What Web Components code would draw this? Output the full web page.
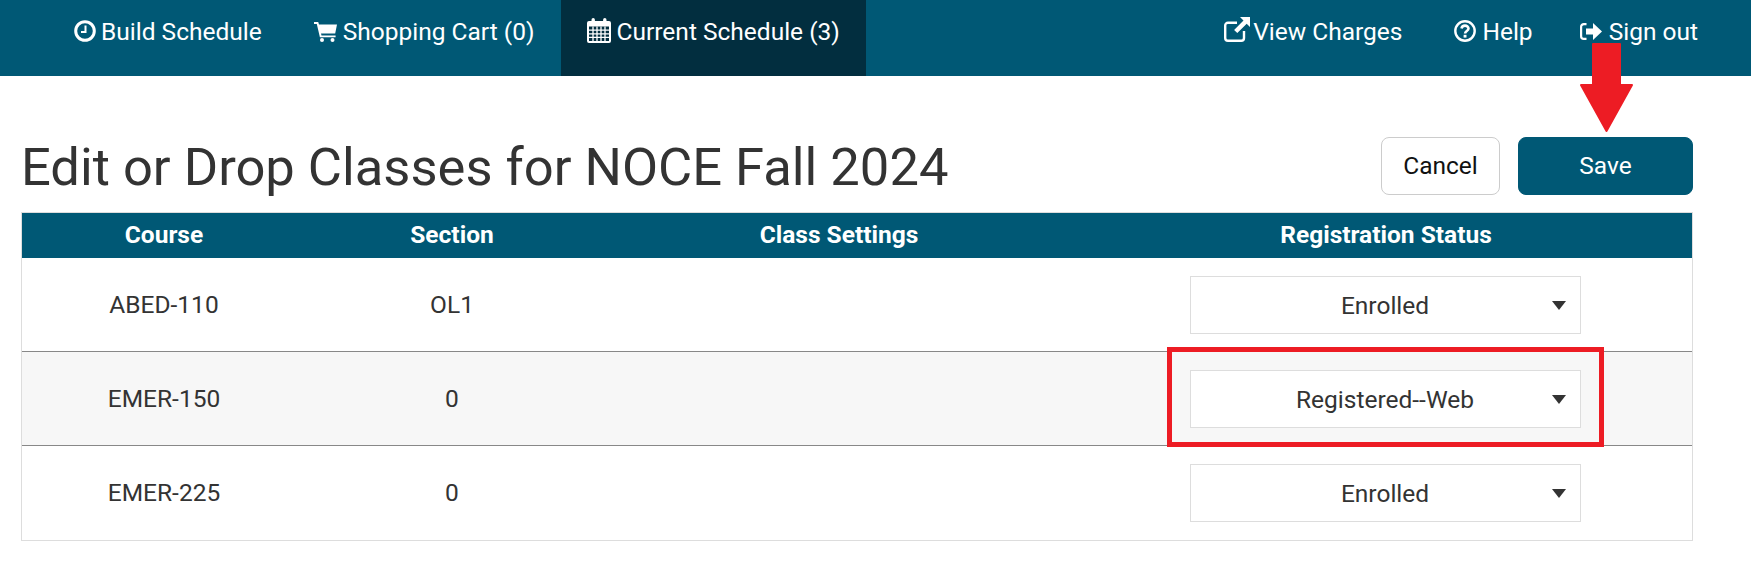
<!DOCTYPE html>
<html lang="en">
<head>
<meta charset="utf-8">
<title>Edit or Drop Classes</title>
<style>
  html, body { margin: 0; background: #fff; }
  body { font-family: Roboto, "Liberation Sans", sans-serif; color: #333; overflow: hidden; }
</style>
</head>
<body>
<app-nav>
  <nav-item icon="clock">Build Schedule</nav-item>
  <nav-item icon="cart">Shopping Cart (0)</nav-item>
  <nav-item icon="calendar" active>Current Schedule (3)</nav-item>
  <nav-item slot="right" icon="external">View Charges</nav-item>
  <nav-item slot="right" icon="help">Help</nav-item>
  <nav-item slot="right" icon="signout">Sign out</nav-item>
</app-nav>
<edit-page>
  <span slot="title">Edit or Drop Classes for NOCE Fall 2024</span>
  <ui-button slot="actions">Cancel</ui-button>
  <ui-button slot="actions" primary>Save</ui-button>
  <class-row head>
    <span>Course</span><span>Section</span><span>Class Settings</span><span>Registration Status</span>
  </class-row>
  <class-row>
    <span>ABED-110</span><span>OL1</span><span></span><status-select>Enrolled</status-select>
  </class-row>
  <class-row shaded>
    <span>EMER-150</span><span>0</span><span></span><status-select highlight>Registered--Web</status-select>
  </class-row>
  <class-row last>
    <span>EMER-225</span><span>0</span><span></span><status-select>Enrolled</status-select>
  </class-row>
</edit-page>

<script>
// w, h = drawn size in px, y = top of the icon measured from the nav top
const ICONS = {
  clock: { w: 22, h: 22, y: 20, gap: 5, svg: `<circle cx="11" cy="11" r="9.3" fill="none" stroke="#fff" stroke-width="3"/><path d="M11.500 5.500v6.500H7" fill="none" stroke="#fff" stroke-width="2"/>` },
  cart: { w: 23, h: 20, y: 22, gap: 6, svg: `<path fill="#fff" d="M0 0h4.200l.8 2.400h18l-1.800 9.100H7l.5 1.900h14.100v1.900H5.900L2.800 1.900H0z"/><circle cx="8" cy="18" r="2" fill="#fff"/><circle cx="18.500" cy="18" r="2" fill="#fff"/>` },
  calendar: { w: 24, h: 25, y: 18, gap: 6, svg: `<path fill="#fff" fill-rule="evenodd" d="M2 3h2.500V1.700a1.700 1.700 0 0 1 3.400 0V3h8.200V1.700a1.700 1.700 0 0 1 3.400 0V3H22a2 2 0 0 1 2 2v18a2 2 0 0 1-2 2H2a2 2 0 0 1-2-2V5a2 2 0 0 1 2-2zM2 8.500V23h20V8.500z"/><path stroke="#fff" stroke-width="1.300" d="M2 12.200h20M2 15.800h20M2 19.400h20M6 8.500V23M10 8.500V23M14 8.500V23M18 8.500V23"/>` },
  external: { w: 26, h: 25, y: 17, gap: 3, svg: `<path fill="none" stroke="#fff" stroke-width="2.400" d="M20 14v7a2.800 2.800 0 0 1-2.800 2.800H4a2.800 2.800 0 0 1-2.800-2.800V8.500A2.800 2.800 0 0 1 4 5.700h9"/><path fill="#fff" d="M16 0h10v10l-3.300-3.300-9.400 9.400-3.200-3.200 9.400-9.400z"/>` },
  help: { w: 22, h: 22, y: 20, gap: 6, svg: `<circle cx="11" cy="11" r="9.700" fill="none" stroke="#fff" stroke-width="2.400"/><path fill="none" stroke="#fff" stroke-width="2.600" d="M7.500 8.500C7.800 6.500 9.200 5.600 11 5.600c2 0 3.500 1.200 3.500 2.900 0 2.500-3.400 2.600-3.400 5"/><rect x="9.600" y="14.800" width="2.900" height="2.800" fill="#fff"/>` },
  signout: { w: 22, h: 17, y: 23, gap: 7, svg: `<path fill="none" stroke="#fff" stroke-width="2.200" d="M6.500 1.100H3.800a2.700 2.700 0 0 0-2.700 2.700v9.400a2.700 2.700 0 0 0 2.700 2.700h2.700"/><path fill="#fff" d="M6 5.500h7V0l9 8.500-9 8.500v-5.500H6z"/>` }
};

class AppNav extends HTMLElement {
  constructor(){
    super();
    this.attachShadow({ mode: "open" });
    this.shadowRoot.innerHTML = `
      <style>
        :host { display: flex; justify-content: space-between; height: 76px; background: #005875; padding: 0 27px 0 48px; }
        div { display: flex; }
        ::slotted(nav-item:last-child) { margin-left: -5px; }
      </style>
      <div><slot></slot></div>
      <div class="right"><slot name="right"></slot></div>
    `;
  }
}

class NavItem extends HTMLElement {
  constructor(){
    super();
    this.attachShadow({ mode: "open" });
  }
  connectedCallback(){
    const icon = ICONS[this.getAttribute("icon")];
    this.shadowRoot.innerHTML = `
      <style>
        :host { display: flex; align-items: flex-start; height: 76px; box-sizing: border-box; padding: 0 26px; color: #fff; font: 400 24.5px/30px Roboto, sans-serif; white-space: nowrap; }
        :host([active]) { background: #022e3f; }
        svg { display: block; flex: none; margin: ${icon.y}px ${icon.gap}px 0 0; }
        span { margin-top: 17px; }
      </style>
      <svg width="${icon.w}" height="${icon.h}" viewBox="0 0 ${icon.w} ${icon.h}">${icon.svg}</svg><span><slot></slot></span>
    `;
  }
}

class EditPage extends HTMLElement {
  constructor(){
    super();
    this.attachShadow({ mode: "open" });
    this.shadowRoot.innerHTML = `
      <style>
        :host { display: block; position: relative; padding: 61px 58px 0 21px; }
        header { display: flex; justify-content: space-between; align-items: center; height: 58px; margin-bottom: 17px; }
        h1 { margin: 2px 0 0; font: 400 52.5px/58px Roboto, sans-serif; color: #333; }
        .actions { display: flex; gap: 18px; }
        .table { border: 1px solid #ddd; }
        .arrow { position: absolute; left: 1580px; top: -33px; width: 53px; height: 89px; }
      </style>
      <header>
        <h1><slot name="title"></slot></h1>
        <div class="actions"><slot name="actions"></slot></div>
      </header>
      <div class="table"><slot></slot></div>
      <svg class="arrow" viewBox="0 0 53 89"><path fill="#ed1c24" stroke="#ed1c24" stroke-width="2" stroke-linejoin="round" d="M13 1h27v41h12L26.500 88 1 42h12z"/></svg>
    `;
  }
}

class UiButton extends HTMLElement {
  constructor(){
    super();
    this.attachShadow({ mode: "open" });
    this.shadowRoot.innerHTML = `
      <style>
        :host { display: flex; align-items: center; justify-content: center; box-sizing: border-box; width: 119px; height: 58px; border: 1px solid #ccc; border-radius: 8px; background: #fff; color: #111; font: 400 24.5px/30px Roboto, sans-serif; }
        :host([primary]) { width: 175px; background: #005875; border-color: #005875; color: #fff; }
      </style>
      <slot></slot>
    `;
  }
}

class ClassRow extends HTMLElement {
  constructor(){
    super();
    this.attachShadow({ mode: "open" });
    this.shadowRoot.innerHTML = `
      <style>
        :host { display: grid; grid-template-columns: 284px 292px 482px 1fr; align-items: center; justify-items: center; height: 94px; box-sizing: border-box; border-bottom: 1px solid #888; background: #fff; font: 400 24.5px/30px Roboto, sans-serif; color: #333; }
        :host([shaded]) { background: #f7f7f7; }
        :host([last]) { border-bottom: 0; }
        :host([head]) { height: 45px; padding-bottom: 2px; border-bottom: 0; background: #005875; color: #fff; font-weight: 700; }
      </style>
      <slot></slot>
    `;
  }
}

class StatusSelect extends HTMLElement {
  constructor(){
    super();
    this.attachShadow({ mode: "open" });
    this.shadowRoot.innerHTML = `
      <style>
        :host { display: flex; position: relative; align-items: center; justify-content: center; box-sizing: border-box; width: 391px; height: 58px; margin-right: 2px; padding-top: 2px; border: 1px solid #ddd; background: #fff; font: 400 24.5px/30px Roboto, sans-serif; color: #333; }
        .caret { position: absolute; right: 14px; top: 24px; width: 0; height: 0; border: 7.5px solid transparent; border-top: 9px solid #333; border-bottom: 0; }
        :host([highlight])::after { content: ""; position: absolute; left: -24px; right: -24px; top: -24px; bottom: -20px; border: 5px solid #ed1c24; }
      </style>
      <slot></slot><span class="caret"></span>
    `;
  }
}

customElements.define('app-nav', AppNav);
customElements.define('nav-item', NavItem);
customElements.define('edit-page', EditPage);
customElements.define('ui-button', UiButton);
customElements.define('class-row', ClassRow);
customElements.define('status-select', StatusSelect);
</script>
</body>
</html>
